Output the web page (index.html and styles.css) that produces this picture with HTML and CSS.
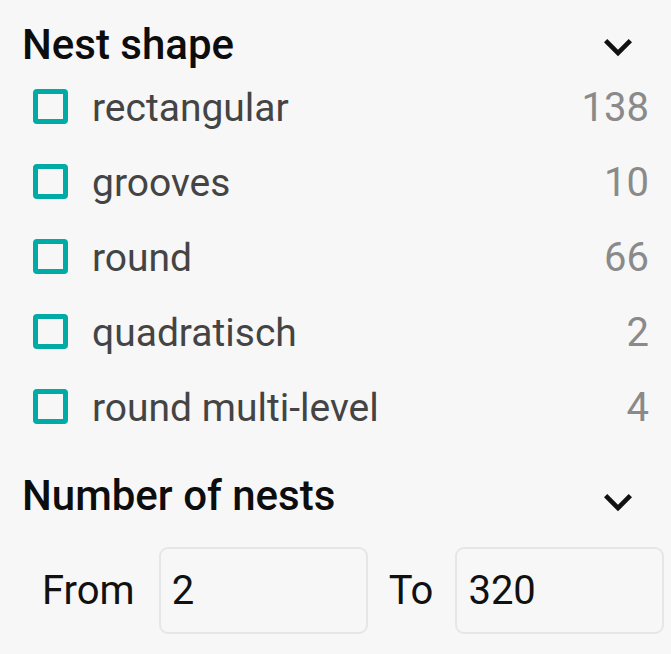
FILE: index.html
```html
<!DOCTYPE html>
<html lang="en">
<head>
<meta charset="utf-8">
<title>Filters</title>
<link rel="stylesheet" href="styles.css">
</head>
<body>
<aside class="filters">
  <section class="facet">
    <header class="facet-head">
      <h2 class="facet-title">Nest shape</h2>
      <svg class="chevron" viewBox="0 0 24 24" aria-hidden="true"><path d="M16.59 8.59L12 13.17 7.41 8.59 6 10l6 6 6-6z"/></svg>
    </header>
    <ul class="options">
      <li class="option"><span class="box"></span><span class="label">rectangular</span><span class="count">138</span></li>
      <li class="option"><span class="box"></span><span class="label">grooves</span><span class="count">10</span></li>
      <li class="option"><span class="box"></span><span class="label">round</span><span class="count">66</span></li>
      <li class="option"><span class="box"></span><span class="label">quadratisch</span><span class="count">2</span></li>
      <li class="option"><span class="box"></span><span class="label">round multi-level</span><span class="count">4</span></li>
    </ul>
  </section>
  <section class="facet facet-range">
    <header class="facet-head head-low">
      <h2 class="facet-title">Number of nests</h2>
      <svg class="chevron" viewBox="0 0 24 24" aria-hidden="true"><path d="M16.59 8.59L12 13.17 7.41 8.59 6 10l6 6 6-6z"/></svg>
    </header>
    <div class="range">
      <label class="range-label">From</label>
      <input class="range-input" type="text" value="2">
      <label class="range-label label-to">To</label>
      <input class="range-input" type="text" value="320">
    </div>
  </section>
</aside>
</body>
</html>
```
FILE: styles.css
```css
* { box-sizing: border-box; }

html, body {
  margin: 0;
  padding: 0;
  background: #f7f7f7;
}

body {
  font-family: Roboto, "Liberation Sans", Arial, sans-serif;
  color: #111;
}

.filters {
  padding: 22px 24px 0 22px;
}

.facet-head {
  display: flex;
  align-items: flex-start;
  justify-content: space-between;
  height: 46px;
}

.facet-title {
  margin: 0;
  font-size: 42px;
  font-weight: 500;
  line-height: 46px;
  color: #0d0d0d;
}

.chevron {
  width: 56px;
  height: 56px;
  margin: -3px 1px 0 0;
  fill: #111;
  flex: none;
}

.head-low .chevron {
  margin-top: 1px;
}

.options {
  list-style: none;
  margin: 1px 0 0;
  padding: 0;
}

.option {
  display: flex;
  align-items: center;
  height: 75px;
}

.box {
  width: 35px;
  height: 35px;
  margin-left: 11px;
  border: 5px solid #00aaa5;
  border-radius: 4px;
  flex: none;
}

.label {
  margin-left: 24px;
  flex: 1;
  font-size: 39px;
  color: #444;
  padding-top: 2px;
}

.count {
  font-size: 40px;
  color: #8a8a8a;
  padding-top: 2px;
  margin-right: -2px;
}

.facet-range {
  margin-top: 29px;
}

.range {
  display: flex;
  align-items: center;
  margin-top: 28px;
  margin-right: -15px;
}

.range-label {
  font-size: 40px;
  color: #111;
  margin-left: 20px;
  margin-right: 24px;
}

.label-to {
  margin-left: 21px;
  margin-right: 22px;
}

.range-input {
  width: 209px;
  height: 87px;
  border: 2px solid #e6e6e6;
  border-radius: 9px;
  background: #f7f7f7;
  font-family: Roboto, "Liberation Sans", Arial, sans-serif;
  font-size: 40px;
  color: #111;
  padding: 0 11px;
  outline: none;
}
```
